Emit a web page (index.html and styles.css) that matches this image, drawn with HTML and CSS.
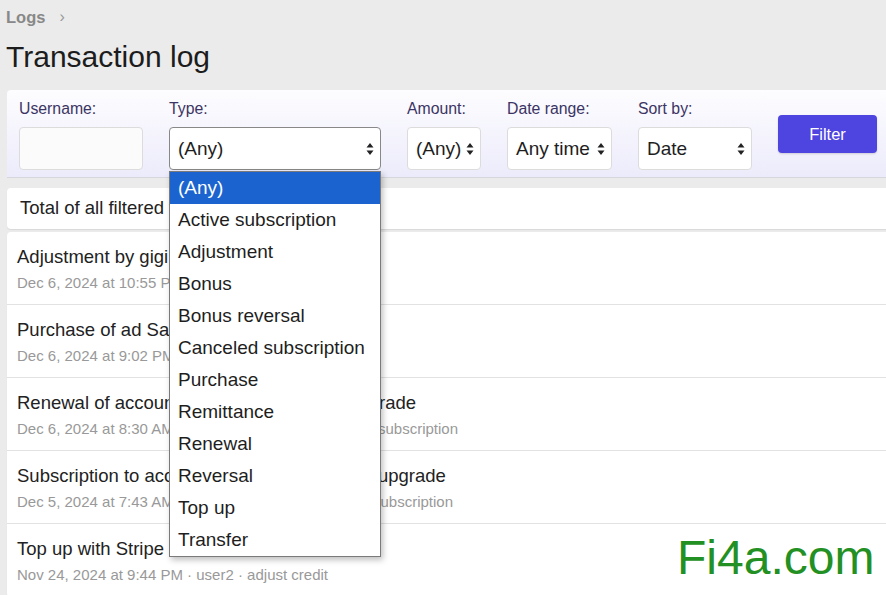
FILE: index.html
```html
<!DOCTYPE html>
<html>
<head>
<meta charset="utf-8">
<link rel="stylesheet" href="styles.css">
</head>
<body>
<div class="page">
  <nav class="crumbs"><span class="crumb">Logs</span><span class="sep">›</span></nav>
  <h1 class="title">Transaction log</h1>

  <form class="filters">
    <div class="field">
      <label class="lbl">Username:</label>
      <div class="input user"></div>
    </div>
    <div class="field type-field">
      <label class="lbl">Type:</label>
      <div class="select w-type"><span>(Any)</span><svg class="arr" viewBox="0 0 8 14"><path d="M4 1 L7.5 5.5 H0.5 Z M4 13 L7.5 8.5 H0.5 Z" fill="#222"/></svg></div>
      <ul class="menu">
        <li class="opt sel">(Any)</li>
        <li class="opt">Active subscription</li>
        <li class="opt">Adjustment</li>
        <li class="opt">Bonus</li>
        <li class="opt">Bonus reversal</li>
        <li class="opt">Canceled subscription</li>
        <li class="opt">Purchase</li>
        <li class="opt">Remittance</li>
        <li class="opt">Renewal</li>
        <li class="opt">Reversal</li>
        <li class="opt">Top up</li>
        <li class="opt">Transfer</li>
      </ul>
    </div>
    <div class="field">
      <label class="lbl">Amount:</label>
      <div class="select w-amount"><span>(Any)</span><svg class="arr" viewBox="0 0 8 14"><path d="M4 1 L7.5 5.5 H0.5 Z M4 13 L7.5 8.5 H0.5 Z" fill="#222"/></svg></div>
    </div>
    <div class="field">
      <label class="lbl">Date range:</label>
      <div class="select w-date"><span>Any time</span><svg class="arr" viewBox="0 0 8 14"><path d="M4 1 L7.5 5.5 H0.5 Z M4 13 L7.5 8.5 H0.5 Z" fill="#222"/></svg></div>
    </div>
    <div class="field">
      <label class="lbl">Sort by:</label>
      <div class="select w-sort"><span>Date</span><svg class="arr" viewBox="0 0 8 14"><path d="M4 1 L7.5 5.5 H0.5 Z M4 13 L7.5 8.5 H0.5 Z" fill="#222"/></svg></div>
    </div>
    <button type="button" class="btn">Filter</button>
  </form>

  <div class="card total">Total of all filtered transactions: 1,250.00</div>

  <div class="card list">
    <div class="row">
      <div class="row-title">Adjustment by gigi of balance</div>
      <div class="row-meta">Dec 6, 2024 at 10:55 PM · user1 · credit</div>
    </div>
    <div class="row">
      <div class="row-title">Purchase of ad Sample listing</div>
      <div class="row-meta">Dec 6, 2024 at 9:02 PM · user1</div>
    </div>
    <div class="row">
      <div class="row-title">Renewal of account Premium Gold plan upgrade</div>
      <div class="row-meta">Dec 6, 2024 at 8:30 AM · user1 · renew premium plan subscription</div>
    </div>
    <div class="row">
      <div class="row-title">Subscription to account Premium Gold plan upgrade</div>
      <div class="row-meta">Dec 5, 2024 at 7:43 AM · user1 · buy premium yearly subscription</div>
    </div>
    <div class="row">
      <div class="row-title">Top up with Stripe</div>
      <div class="row-meta">Nov 24, 2024 at 9:44 PM · user2 · adjust credit</div>
    </div>
  </div>

  <div class="watermark">Fi4a.com</div>
</div>
</body>
</html>
```

FILE: styles.css
```css
html, body {
  margin: 0;
  padding: 0;
}
body {
  background: #ebebeb;
  font-family: "Liberation Sans", Arial, sans-serif;
  color: #222;
  overflow: hidden;
  width: 886px;
  height: 595px;
}
.page {
  width: 930px;
  position: relative;
  padding: 0 0 0 7px;
}
.crumbs {
  height: 18px;
  padding-top: 8px;
  margin-left: -1px;
  display: flex;
  align-items: center;
  gap: 14px;
  font-size: 16.5px;
  line-height: 18px;
  color: #888;
}
.crumb { font-weight: bold; }
.sep { font-size: 16px; color: #999; }
.title {
  margin: 13px 0 0 -1px;
  font-size: 30px;
  line-height: 35px;
  font-weight: normal;
  color: #1c1c1c;
  height: 35px;
}
.filters {
  margin: 16px 0 0 0;
  height: 87px;
  border-bottom: 1px solid #d6d6dd;
  border-radius: 4px 0 0 0;
  background: linear-gradient(to bottom, #fdfdff 0%, #ecebfb 100%);
  display: flex;
  align-items: flex-start;
  padding: 0 0 0 12px;
  gap: 26px;
}
.field {
  display: flex;
  flex-direction: column;
  position: relative;
}
.lbl {
  font-size: 15.8px;
  line-height: 18px;
  margin-top: 10px;
  color: #3b3464;
  height: 18px;
}
.input, .select {
  margin-top: 9px;
  height: 41px;
  border: 1px solid #dcdcdc;
  border-radius: 4px;
  background: #fff;
  box-sizing: content-box;
}
.input.user {
  width: 122px;
  background: #fbfbfb;
}
.select {
  display: flex;
  align-items: center;
  justify-content: space-between;
  padding: 0 6px 0 8px;
  font-size: 19px;
  color: #1e1e1e;
}
.select span { line-height: 22px; }
.arr { width: 8px; height: 14px; flex: none; }
.w-type { width: 196px; border-color: #888; }
.w-amount { width: 58px; }
.w-date { width: 89px; }
.w-sort { width: 98px; }
.btn {
  margin: 25px 0 0 0;
  width: 99px;
  height: 38px;
  border: none;
  border-radius: 4px;
  background: #4e44e0;
  color: #fff;
  font-family: "Liberation Sans", Arial, sans-serif;
  font-size: 16.5px;
  padding: 0;
  box-shadow: 0 1px 2px rgba(0,0,0,0.15);
}
.menu {
  position: absolute;
  left: 0;
  top: 81px;
  width: 210px;
  margin: 0;
  padding: 0;
  list-style: none;
  background: #fff;
  border: 1px solid #7a7a7a;
  box-shadow: 2px 3px 6px rgba(0,0,0,0.25);
  z-index: 10;
}
.opt {
  height: 32px;
  line-height: 31px;
  padding-left: 8px;
  font-size: 19px;
  color: #1e1e1e;
}
.opt.sel {
  background: #1b64d0;
  color: #fff;
}
.card {
  background: #fff;
  border-radius: 4px 0 0 4px;
  box-shadow: 0 1px 1px rgba(0,0,0,0.08);
}
.total {
  margin-top: 10px;
  height: 41px;
  line-height: 40px;
  padding-left: 13px;
  font-size: 18.5px;
  color: #222;
}
.list {
  margin-top: 3px;
}
.row {
  border-bottom: 1px solid #e2e2e2;
  padding-left: 10px;
  box-sizing: border-box;
  height: 73px;
}
.row-title {
  padding-top: 14px;
  font-size: 18.5px;
  line-height: 22px;
  color: #222;
}
.row-meta {
  margin-top: 6px;
  font-size: 15px;
  line-height: 18px;
  color: #999;
}
.watermark {
  position: absolute;
  left: 677px;
  top: 530px;
  font-size: 48px;
  line-height: 56px;
  color: #239023;
}
```
